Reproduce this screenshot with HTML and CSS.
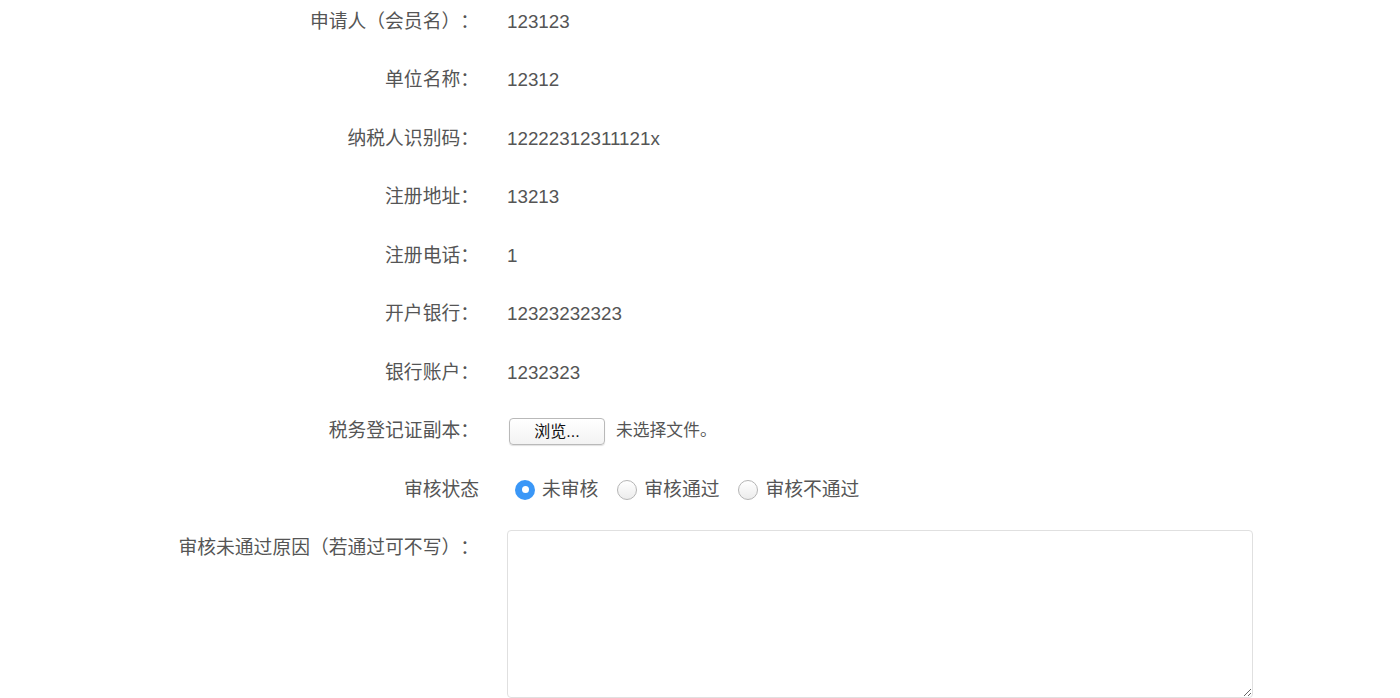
FILE: index.html
```html
<!DOCTYPE html>
<html lang="zh-CN">
<head>
<meta charset="utf-8">
<title>审核</title>
<link rel="stylesheet" href="styles.css">
</head>
<body>
<form class="form">
  <div class="row"><div class="label">申请人（会员名）：</div><div class="value">123123</div></div>
  <div class="row"><div class="label">单位名称：</div><div class="value">12312</div></div>
  <div class="row"><div class="label">纳税人识别码：</div><div class="value">12222312311121x</div></div>
  <div class="row"><div class="label">注册地址：</div><div class="value">13213</div></div>
  <div class="row"><div class="label">注册电话：</div><div class="value">1</div></div>
  <div class="row"><div class="label">开户银行：</div><div class="value">12323232323</div></div>
  <div class="row"><div class="label">银行账户：</div><div class="value">1232323</div></div>
  <div class="row"><div class="label">税务登记证副本：</div>
    <div class="value file"><span class="file-btn">浏览...</span><span class="file-text">未选择文件。</span></div></div>
  <div class="row"><div class="label">审核状态</div>
    <div class="value radios">
      <label class="radio"><span class="dot checked"></span>未审核</label>
      <label class="radio"><span class="dot"></span>审核通过</label>
      <label class="radio"><span class="dot"></span>审核不通过</label>
    </div></div>
  <div class="row top"><div class="label">审核未通过原因（若通过可不写）：</div>
    <div class="value"><textarea class="reason"></textarea></div></div>
</form>
</body>
</html>
```
FILE: styles.css
```css
html, body {
  margin: 0;
  padding: 0;
  background: #fff;
}
body {
  font-family: "Liberation Sans", "Noto Sans CJK SC", sans-serif;
  color: #555;
  font-size: 18.8px;
  text-spacing-trim: space-all;
}
.form {
  display: flex;
  flex-direction: column;
  gap: 18.5px;
  padding-top: 1.5px;
}
.row {
  display: grid;
  grid-template-columns: 479px 1fr;
  column-gap: 28px;
  align-items: center;
  min-height: 40px;
}
.row.top {
  align-items: start;
}
.label {
  text-align: right;
  line-height: 40px;
  white-space: nowrap;
}
.value {
  line-height: 40px;
}
.file {
  display: flex;
  align-items: center;
  gap: 11px;
}
.file-btn {
  box-sizing: border-box;
  margin-left: 2px;
  width: 96px;
  height: 27px;
  border: 1px solid #b9b9b9;
  border-radius: 4px;
  background: linear-gradient(#fff, #f3f3f3);
  box-shadow: 0 1px 1px rgba(0,0,0,0.12);
  color: #111;
  font-size: 16px;
  line-height: 25px;
  text-align: center;
}
.file-text {
  font-size: 16.8px;
}
.radios {
  display: flex;
  align-items: center;
  gap: 19px;
  padding-left: 8px;
}
.radio {
  display: flex;
  align-items: center;
  gap: 7px;
}
.dot {
  box-sizing: border-box;
  width: 20px;
  height: 20px;
  border-radius: 50%;
  border: 1px solid #b5b5b5;
  background: linear-gradient(#fff, #ececec);
  display: inline-block;
  position: relative;
}
.dot.checked {
  border: none;
  background: #3a97f7;
}
.dot.checked::after {
  content: "";
  position: absolute;
  left: 6.5px;
  top: 6.5px;
  width: 7px;
  height: 7px;
  border-radius: 50%;
  background: #fff;
}
.reason {
  display: block;
  box-sizing: border-box;
  margin-top: 2px;
  width: 746px;
  height: 168px;
  border: 1px solid #e0e0e0;
  border-radius: 4px;
  background: #fff;
}
```
